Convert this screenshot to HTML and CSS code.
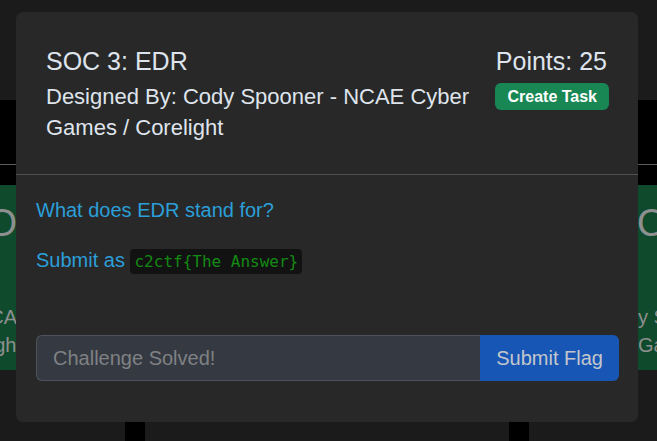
FILE: index.html
```html
<!DOCTYPE html>
<html>
<head>
<meta charset="utf-8">
<link rel="stylesheet" href="styles.css">
</head>
<body>
<div class="page">
  <div class="topbar"></div>
  <div class="band"><div class="band-line"></div></div>
  <div class="cards">
    <div class="card card-left">
      <div class="card-title">O</div>
      <div class="card-line">CA</div>
      <div class="card-line card-line-last">ght</div>
    </div>
    <div class="card card-right">
      <div class="card-title">OC</div>
      <div class="card-line">y S</div>
      <div class="card-line">Ga</div>
    </div>
  </div>
  <div class="lower">
    <div class="post post-a"></div>
    <div class="post post-b"></div>
  </div>
</div>

<div class="modal">
  <div class="modal-header">
    <div class="head-left">
      <div class="title">SOC 3: EDR</div>
      <div class="author">Designed By: Cody Spooner - NCAE Cyber Games / Corelight</div>
    </div>
    <div class="head-right">
      <div class="points">Points: 25</div>
      <span class="badge">Create Task</span>
    </div>
  </div>
  <div class="modal-body">
    <p class="question">What does EDR stand for?</p>
    <p class="question">Submit as <code class="flag">c2ctf{The Answer}</code></p>
    <div class="input-group">
      <input class="flag-input" type="text" placeholder="Challenge Solved!">
      <button class="submit-btn">Submit Flag</button>
    </div>
  </div>
</div>
</body>
</html>
```

FILE: styles.css
```css
* { box-sizing: border-box; }
html, body {
  margin: 0;
  padding: 0;
  width: 657px;
  height: 441px;
  overflow: hidden;
  background: #1b1b1b;
  font-family: "Liberation Sans", Arial, sans-serif;
}
.page {
  display: flex;
  flex-direction: column;
  height: 441px;
}
.topbar {
  height: 100px;
  background: #1b1b1b;
}
.band {
  height: 85px;
  background: #000;
  padding-top: 64px;
}
.band-line {
  height: 1px;
  background: #5c5c5c;
}
.cards {
  height: 185px;
  display: flex;
  justify-content: space-between;
  background: #1b1b1b;
}
.card {
  background: #0f4a2c;
  color: #8d8f90;
  padding-top: 15px;
  white-space: nowrap;
  overflow: hidden;
  display: flex;
  flex-direction: column;
}
.card-left {
  width: 16px;
  align-items: flex-end;
}
.card-right {
  width: 19px;
  align-items: flex-start;
}
.card-title {
  font-size: 38px;
  line-height: 46px;
  margin-bottom: 57px;
}
.card-left .card-title { margin-right: -1px; }
.card-line {
  font-size: 20px;
  line-height: 28px;
}
.card-left .card-line { margin-right: -1px; }
.card-left .card-line-last { margin-right: -6px; }
.card-right .card-title { margin-left: -1px; }
.card-right .card-line { margin-left: 0; }
.lower {
  flex: 1;
  display: flex;
  background: #1b1b1b;
  padding-left: 125px;
  gap: 364px;
}
.post {
  width: 20px;
  background: #000;
}

.modal {
  position: absolute;
  left: 16px;
  top: 12px;
  width: 622px;
  height: 410px;
  background: #282828;
  border-radius: 7px;
  display: flex;
  flex-direction: column;
}
.modal-header {
  display: flex;
  justify-content: space-between;
  align-items: flex-start;
  padding: 34px 29px 31px 30px;
  border-bottom: 1px solid #4e4f52;
  color: #dfe4ec;
}
.head-left {
  width: 440px;
}
.title {
  font-size: 25px;
  line-height: 30px;
}
.author {
  font-size: 22px;
  line-height: 31px;
  margin-top: 5px;
}
.head-right {
  display: flex;
  flex-direction: column;
  align-items: flex-end;
}
.points {
  font-size: 25px;
  line-height: 30px;
  margin-right: 2px;
}
.badge {
  margin-top: 7px;
  background: #198754;
  color: #fff;
  font-weight: bold;
  font-size: 16px;
  line-height: 19px;
  padding: 4px 12px;
  border-radius: 6px;
}
.modal-body {
  padding: 20px 19px 40px 20px;
  display: flex;
  flex-direction: column;
}
.question {
  margin: 0 0 20px 0;
  font-size: 20px;
  line-height: 30px;
  color: #2b9fd9;
}
.question + .question { margin-bottom: 0; }
.flag {
  font-family: "DejaVu Sans Mono", "Liberation Mono", monospace;
  font-size: 16px;
  line-height: 18px;
  color: #138a13;
  background: #121212;
  padding: 3px 4px;
  border-radius: 4px;
}
.input-group {
  margin-top: 60px;
  display: flex;
  height: 46px;
}
.flag-input {
  flex: 1;
  min-width: 0;
  background: #353a42;
  border: 1px solid #4e535b;
  border-right: none;
  border-radius: 6px 0 0 6px;
  padding: 7px 16px;
  font-family: "Liberation Sans", Arial, sans-serif;
  font-size: 20px;
  color: #ddd;
  outline: none;
}
.flag-input::placeholder {
  color: #7f8184;
}
.submit-btn {
  background: #1856b5;
  border: none;
  border-radius: 0 6px 6px 0;
  padding: 0 16px;
  font-family: "Liberation Sans", Arial, sans-serif;
  font-size: 20px;
  color: #c3c6cc;
}
```
